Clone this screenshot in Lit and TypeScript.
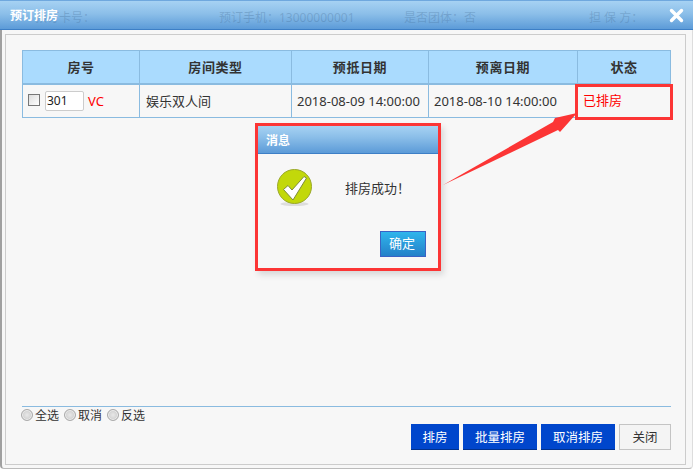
import { LitElement, html, css } from "lit";
import { customElement } from "lit/decorators.js";

@customElement("app-root")
export class AppRoot extends LitElement {
  static styles = css`
    :host { display: block; width: 693px; height: 470px; position: relative; overflow: hidden; background: #fff; font-family: "Noto Sans", "Noto Sans CJK SC", sans-serif; font-size: 12px; color: #333; }
    .win { box-sizing: border-box; width: 693px; height: 469px; display: flex; flex-direction: column; background: #f7f7f7; border-left: 2px solid #a0a0a0; border-right: 1px solid #ddd; border-bottom: 1px solid #bbb; border-radius: 0 0 4px 4px; }
    .bar { flex: none; height: 30px; box-sizing: border-box; display: flex; align-items: center; margin: 0 -1px 0 -2px; padding-left: 10px; background: linear-gradient(#a6d2f3, #8cbfe9 45%, #5c9bd8); border-top: 1px solid #6fa8de; border-bottom: 1px solid #3d7fc6; position: relative; }
    .bar-title { color: #fff; font-weight: 700; font-size: 12px; position: relative; }
    .ghosts { position: absolute; inset: 0; font-size: 12px; color: rgba(60,100,140,.28); white-space: nowrap; }
    .ghosts span { position: absolute; top: 7px; }
    .close { position: absolute; right: 9px; top: 7px; width: 15px; height: 15px; }
    .panel { flex: 1; box-sizing: border-box; margin: 4px 6px 3px 3px; border: 1px solid #ccc; background: #f7f7f7; padding: 15px 15px 14px 16px; display: flex; flex-direction: column; }
    .tbl { width: 649px; }
    .row { display: grid; grid-template-columns: 118px 152px 137px 149px 93px; }
    .head > div { height: 35px; box-sizing: border-box; padding-bottom: 2px; background: #aadbfe; border: 1px solid #8abbe0; border-left-width: 0; border-bottom: 2px solid #8abbe0; display: flex; align-items: center; justify-content: center; font-weight: 700; font-size: 13px; letter-spacing: .6px; color: #333; }
    .head > div:first-child { border-left-width: 1px; }
    .body > div { height: 33px; box-sizing: border-box; border-bottom: 1px solid #8abbe0; border-right: 1px solid #8abbe0; display: flex; align-items: center; font-size: 13px; color: #333; padding: 0 0 2px 6px; white-space: nowrap; }
    .body > div:first-child { border-left: 1px solid #8abbe0; padding: 0 0 0 5px; }
    .body > div:last-child { border: none; color: #f00; padding: 0 0 4px 5px; }
    .body > .date { font-size: 13px; padding: 0 0 0 5px; }
    .cb { box-sizing: border-box; width: 12px; height: 12px; border: 1px solid #777; background: linear-gradient(135deg, #ddd, #fff); margin-right: 5px; position: relative; top: -1px; }
    .num { box-sizing: border-box; width: 39px; height: 20px; line-height: 18px; border: 1px solid #ccc; border-radius: 2px; background: #fff; padding-left: 1px; color: #222; font-size: 12px; }
    .vc { color: #f00; margin-left: 4px; font-size: 13px; }
    .spacer { flex: 1; }
    .foot { border-top: 1px solid #8abbe0; width: 649px; }
    .radios { display: flex; align-items: center; height: 16px; margin-left: -1px; font-size: 12px; color: #333; }
    .radio { box-sizing: border-box; width: 12px; height: 12px; border-radius: 50%; border: 1px solid #aaa; background: radial-gradient(circle, #e8e8e8, #c4c4c4); box-shadow: inset 0 0 0 1px #eee; margin-right: 2px; }
    .lbl { margin-right: 5px; }
    .btns { display: flex; justify-content: flex-end; gap: 4px; margin-top: 1px; }
    .btn { box-sizing: border-box; height: 26px; display: flex; align-items: center; justify-content: center; background: #0046cc; border-bottom: 1px solid #00308c; color: #fff; font-size: 12.5px; padding-bottom: 1px; }
    .btn.w1 { width: 48px; } .btn.w2 { width: 74px; } .btn.w3 { width: 74px; }
    .btn.close-btn { width: 52px; background: #f4f4f4; border: 1px solid #c4c4c4; color: #333; }
    .redbox { position: absolute; left: 575px; top: 84px; width: 98px; height: 36px; box-sizing: border-box; border: 3px solid #fc3535; }
    .arrow { position: absolute; left: 0; top: 0; }
    .dlg { position: absolute; left: 255px; top: 123px; width: 186px; height: 148px; box-sizing: border-box; border: 3px solid #fc3535; background: #f7f7f7; box-shadow: 3px 4px 6px rgba(0,0,0,.12); display: flex; flex-direction: column; }
    .dlg-bar { flex: none; height: 28px; box-sizing: border-box; background: linear-gradient(#a6d2f3, #8cbfe9 40%, #5c9bd8); border-bottom: 1px solid #3d7fc6; color: #fff; font-weight: 700; font-size: 12px; display: flex; align-items: center; padding-left: 8px; }
    .dlg-body { flex: 1; position: relative; display: flex; padding: 15px 12px 11px 19px; }
    .msg { margin-left: 32px; margin-top: 10px; font-size: 13px; line-height: 18px; color: #333; }
    .ok { position: absolute; right: 12px; bottom: 11px; box-sizing: border-box; width: 46px; height: 26px; border: 1px solid #3a62c4; background: linear-gradient(#2fb5ec, #2480c8); color: #fff; font-size: 13px; display: flex; align-items: center; justify-content: center; padding: 0 2px 3px 0; }
  `;

  render() {
    return html`
      <div class="win">
        <div class="bar">
          <div class="ghosts">
            <span style="left:35px">预订卡号：</span>
            <span style="left:219px">预订手机：13000000001</span>
            <span style="left:404px">是否团体：否</span>
            <span style="left:589px">担 保 方：</span>
          </div>
          <span class="bar-title">预订排房</span>
          <svg class="close" viewBox="0 0 15 15"><path d="M2.5 2.5L12.5 12.5M12.5 2.5L2.5 12.5" stroke="#fff" stroke-width="3.4" stroke-linecap="round"/></svg>
        </div>
        <div class="panel">
          <div class="tbl">
            <div class="row head">
              <div>房号</div><div>房间类型</div><div>预抵日期</div><div>预离日期</div><div>状态</div>
            </div>
            <div class="row body">
              <div><span class="cb"></span><span class="num">301</span><span class="vc">VC</span></div>
              <div>娱乐双人间</div>
              <div class="date">2018-08-09 14:00:00</div>
              <div class="date">2018-08-10 14:00:00</div>
              <div>已排房</div>
            </div>
          </div>
          <div class="spacer"></div>
          <div class="foot">
            <div class="radios">
              <span class="radio"></span><span class="lbl">全选</span>
              <span class="radio"></span><span class="lbl">取消</span>
              <span class="radio"></span><span class="lbl">反选</span>
            </div>
            <div class="btns">
              <div class="btn w1">排房</div>
              <div class="btn w2">批量排房</div>
              <div class="btn w3">取消排房</div>
              <div class="btn close-btn">关闭</div>
            </div>
          </div>
        </div>
      </div>
      <div class="redbox"></div>
      <svg class="arrow" width="693" height="470" viewBox="0 0 693 470">
        <polygon points="443,185 553,122 555,118 577,113 560,132 558,130" fill="#fc3535"/>
      </svg>
      <div class="dlg">
        <div class="dlg-bar">消息</div>
        <div class="dlg-body">
          <svg width="36" height="38" viewBox="0 0 36 38">
            <ellipse cx="17.5" cy="35" rx="14" ry="2" fill="#ddd"/>
            <circle cx="17.5" cy="17.5" r="17" fill="#c2d80a" stroke="#9aa82a" stroke-width="1"/>
            <path d="M6.5 20.5L11 16.5L15 21L27 7.5L29.5 9L16 31Z" fill="#fff" stroke="#7e8c3a" stroke-width="1" stroke-linejoin="round"/>
          </svg>
          <div class="msg">排房成功！</div>
          <div class="ok">确定</div>
        </div>
      </div>
    `;
  }
}
